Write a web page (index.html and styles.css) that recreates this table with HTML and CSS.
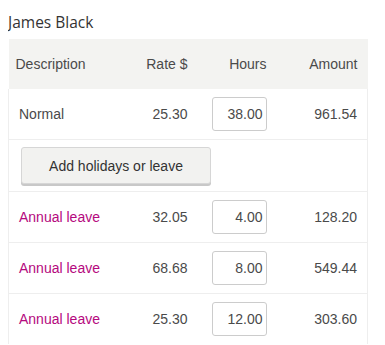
FILE: index.html
```html
<!DOCTYPE html>
<html>
<head>
<meta charset="utf-8">
<link rel="stylesheet" href="styles.css">
</head>
<body>
<div class="employee">
  <h2 class="name">James Black</h2>
  <table class="pay">
    <thead>
      <tr>
        <th class="desc">Description</th>
        <th class="num rate">Rate $</th>
        <th class="num hours">Hours</th>
        <th class="num amount">Amount</th>
      </tr>
    </thead>
    <tbody>
      <tr>
        <td class="desc">Normal</td>
        <td class="num">25.30</td>
        <td class="num hours"><input class="hrs" type="text" value="38.00"></td>
        <td class="num">961.54</td>
      </tr>
      <tr class="btn-row">
        <td colspan="4"><button class="add">Add holidays or leave</button></td>
      </tr>
      <tr>
        <td class="desc leave">Annual leave</td>
        <td class="num">32.05</td>
        <td class="num hours"><input class="hrs" type="text" value="4.00"></td>
        <td class="num">128.20</td>
      </tr>
      <tr>
        <td class="desc leave">Annual leave</td>
        <td class="num">68.68</td>
        <td class="num hours"><input class="hrs" type="text" value="8.00"></td>
        <td class="num">549.44</td>
      </tr>
      <tr>
        <td class="desc leave">Annual leave</td>
        <td class="num">25.30</td>
        <td class="num hours"><input class="hrs" type="text" value="12.00"></td>
        <td class="num">303.60</td>
      </tr>
    </tbody>
  </table>
</div>
</body>
</html>
```

FILE: styles.css
```css
body {
  margin: 8px;
  background: #fff;
  font-family: "Liberation Sans", Arial, sans-serif;
  color: #4a4a4a;
}
.name {
  margin: 0;
  height: 31px;
  padding-top: 3px;
  box-sizing: border-box;
  font-family: "Open Sans", sans-serif;
  font-weight: normal;
  font-size: 15.5px;
  line-height: 22px;
  color: #333;
}
.pay {
  width: 360px;
  border-collapse: collapse;
  font-size: 14px;
  table-layout: fixed;
}
.pay th {
  background: #f3f3f1;
  font-weight: normal;
  height: 50px;
  padding: 0 10px;
  color: #4a4a4a;
  text-align: left;
}
.pay td {
  height: 50px;
  padding: 0 10px;
  border-top: 1px solid #eeeeee;
}
.pay tbody tr td:first-child { border-left: 1px solid #eeeeee; }
.pay tbody tr td:last-child { border-right: 1px solid #eeeeee; }
.pay tbody tr:first-child td { border-top: none; }
.pay .desc { width: 89px; }
.pay th.desc { padding-left: 7px; }
.pay .rate { width: 63px; }
.pay .hours { width: 59px; }
.pay .num { text-align: right; }
.leave { color: #b5097e; }
.hrs {
  width: 55px;
  height: 34px;
  box-sizing: border-box;
  border: 1px solid #cccccc;
  border-radius: 3px;
  font-family: "Liberation Sans", Arial, sans-serif;
  font-size: 14px;
  color: #4a4a4a;
  text-align: right;
  padding: 0 3px 0 0;
  vertical-align: middle;
}
.pay .btn-row td { height: 51px; padding-left: 12px; }
.add {
  width: 190px;
  height: 37px;
  background: #f2f2f0;
  border: 1px solid #d6d6d6;
  border-radius: 3px;
  box-shadow: 0 2px 0 #c8c8c8;
  font-family: "Liberation Sans", Arial, sans-serif;
  font-size: 14px;
  color: #333;
  vertical-align: middle;
}
```
